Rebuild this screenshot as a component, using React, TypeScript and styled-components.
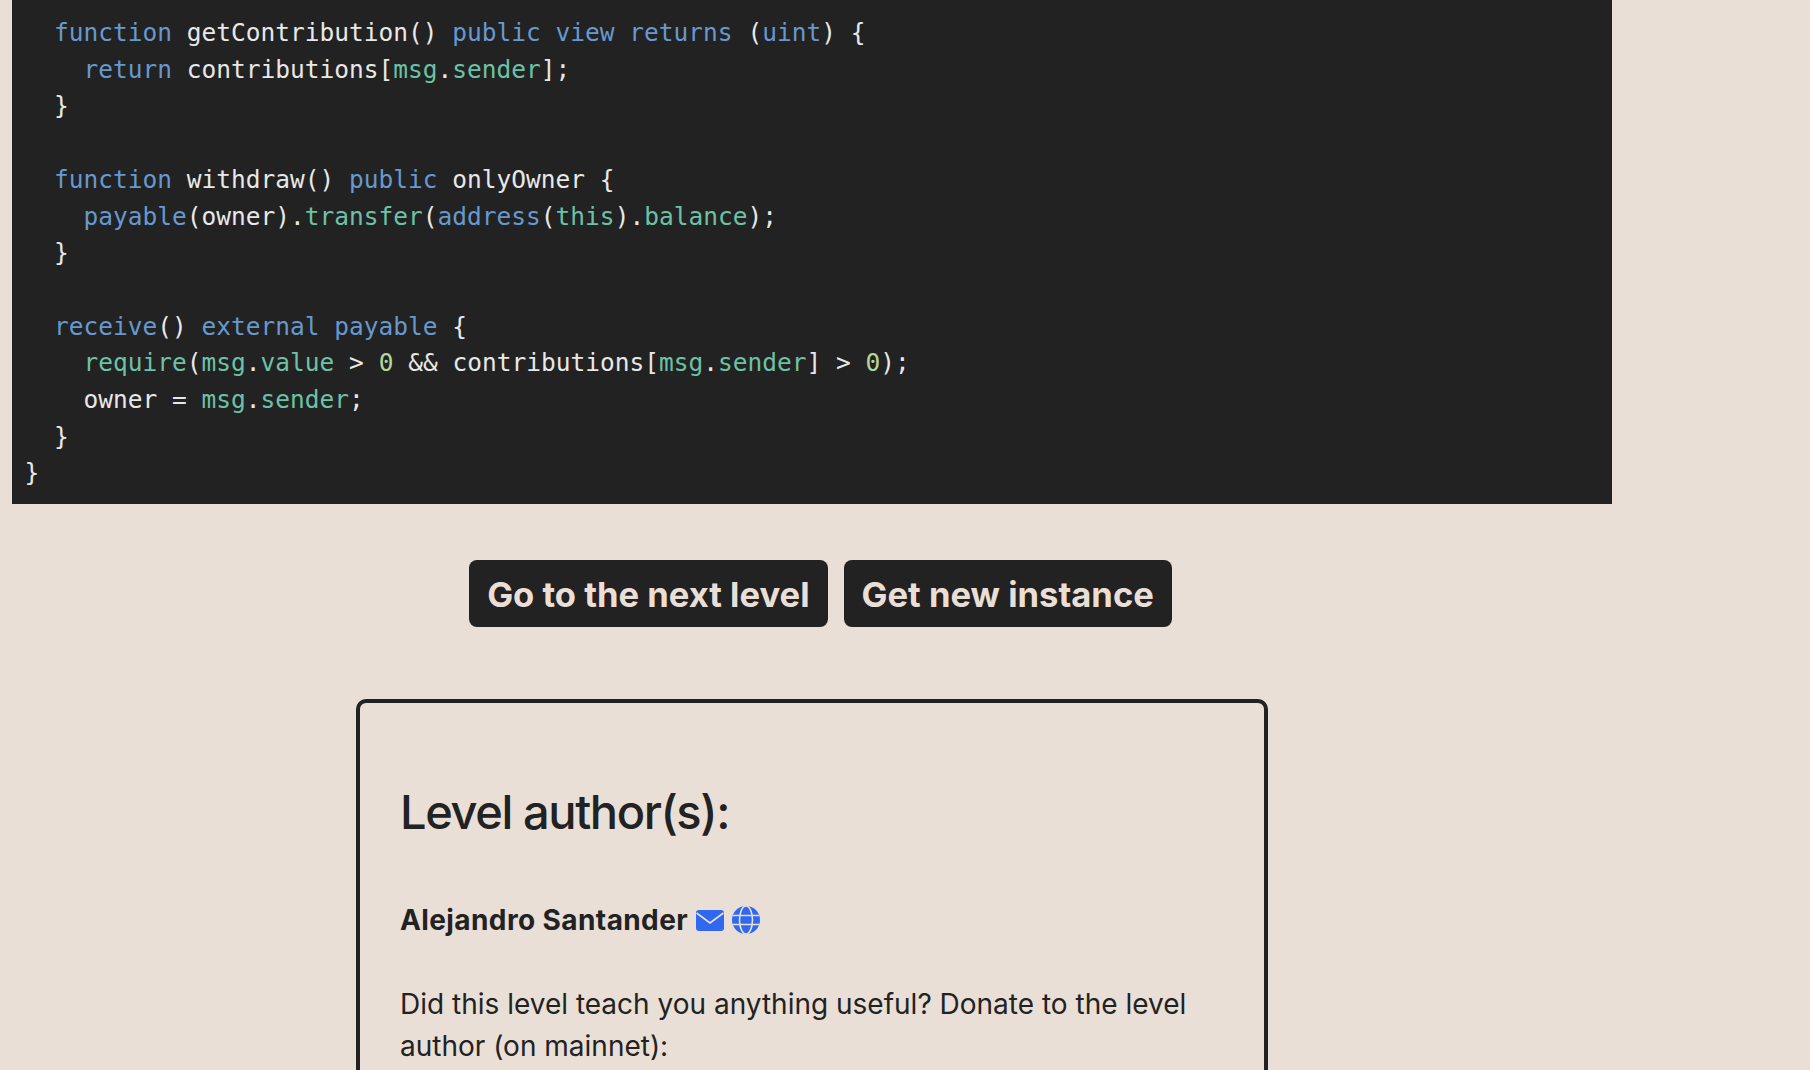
import React from "react";
import styled, { createGlobalStyle } from "styled-components";

const Global = createGlobalStyle`
  html, body { margin: 0; padding: 0; height: 1070px; overflow: hidden; background: #e9dfd6; }
  body { font-family: Inter, "Liberation Sans", sans-serif; color: #222222; }
`;

const Page = styled.main`
  width: 1600px;
  margin-left: 12px;
  display: flex;
  flex-direction: column;
`;

const CodeBlock = styled.pre`
  margin: 0;
  padding: 15px 12.5px 12px;
  background: #222222;
  color: #e8e8e8;
  font-family: "DejaVu Sans Mono", monospace;
  font-size: 24.5px;
  line-height: 36.7px;
  height: 504px;
  box-sizing: border-box;
  overflow: hidden;
`;

const Kw = styled.span`color: #6699d0;`;
const Fn = styled.span`color: #6cc2a6;`;
const Num = styled.span`color: #b5d69c;`;

const Actions = styled.div`
  display: flex;
  justify-content: center;
  gap: 16px;
  margin-top: 56px;
  padding-left: 17px;
`;

const ActionButton = styled.button`
  height: 67px;
  padding: 0 18px;
  border: 0;
  border-radius: 8px;
  background: #222222;
  color: #e9dfd6;
  font-family: Inter, "Liberation Sans", sans-serif;
  font-size: 34.6px;
  font-weight: 700;
`;

const AuthorCard = styled.section`
  box-sizing: border-box;
  width: 912px;
  margin: 72px auto 0;
  padding: 81px 40px 0;
  border: 4px solid #222222;
  border-radius: 10px;
  height: 600px;
`;

const Title = styled.h2`
  margin: 0;
  font-size: 47px;
  font-weight: 500;
  line-height: 56px;
  letter-spacing: -1.4px;
`;

const AuthorRow = styled.div`
  display: flex;
  align-items: center;
  gap: 8px;
  margin-top: 59px;
  font-size: 28px;
  font-weight: 700;
  line-height: 42px;
  letter-spacing: 0.4px;
`;

const IconLink = styled.a`
  display: inline-flex;
  color: #3068f0;
`;

const Text = styled.p`
  margin: 42px 0 0;
  font-size: 28px;
  line-height: 42px;
`;

const MailIcon = () => (
  <svg width="28" height="21" viewBox="0 0 28 21" aria-hidden="true">
    <rect width="28" height="21" rx="3" fill="currentColor" />
    <path d="M0.5 3 L14 13 L27.5 3" fill="none" stroke="#e9dfd6" strokeWidth="1.8" />
  </svg>
);

const GlobeIcon = () => (
  <svg width="28" height="28" viewBox="0 0 28 28" aria-hidden="true">
    <circle cx="14" cy="14" r="14" fill="currentColor" />
    <g fill="none" stroke="#e9dfd6" strokeWidth="1.6">
      <ellipse cx="14" cy="14" rx="6.5" ry="14" />
      <path d="M0.5 9.5 H27.5 M0.5 18.5 H27.5" />
    </g>
  </svg>
);

export default function App() {
  return (
    <>
      <Global />
      <Page>
        <CodeBlock>
{"  "}<Kw>function</Kw> getContribution() <Kw>public</Kw> <Kw>view</Kw> <Kw>returns</Kw> (<Kw>uint</Kw>) {"{"}{"\n"}
{"    "}<Kw>return</Kw> contributions[<Fn>msg</Fn>.<Fn>sender</Fn>];{"\n"}
{"  }"}{"\n"}
{"\n"}
{"  "}<Kw>function</Kw> withdraw() <Kw>public</Kw> onlyOwner {"{"}{"\n"}
{"    "}<Kw>payable</Kw>(owner).<Fn>transfer</Fn>(<Kw>address</Kw>(<Fn>this</Fn>).<Fn>balance</Fn>);{"\n"}
{"  }"}{"\n"}
{"\n"}
{"  "}<Kw>receive</Kw>() <Kw>external</Kw> <Kw>payable</Kw> {"{"}{"\n"}
{"    "}<Fn>require</Fn>(<Fn>msg</Fn>.<Fn>value</Fn> {">"} <Num>0</Num> && contributions[<Fn>msg</Fn>.<Fn>sender</Fn>] {">"} <Num>0</Num>);{"\n"}
{"    "}owner = <Fn>msg</Fn>.<Fn>sender</Fn>;{"\n"}
{"  }"}{"\n"}
{"}"}
        </CodeBlock>
        <Actions>
          <ActionButton>Go to the next level</ActionButton>
          <ActionButton>Get new instance</ActionButton>
        </Actions>
        <AuthorCard>
          <Title>Level author(s):</Title>
          <AuthorRow>
            Alejandro Santander
            <IconLink><MailIcon /></IconLink>
            <IconLink><GlobeIcon /></IconLink>
          </AuthorRow>
          <Text>Did this level teach you anything useful? Donate to the level author (on mainnet):</Text>
        </AuthorCard>
      </Page>
    </>
  );
}
